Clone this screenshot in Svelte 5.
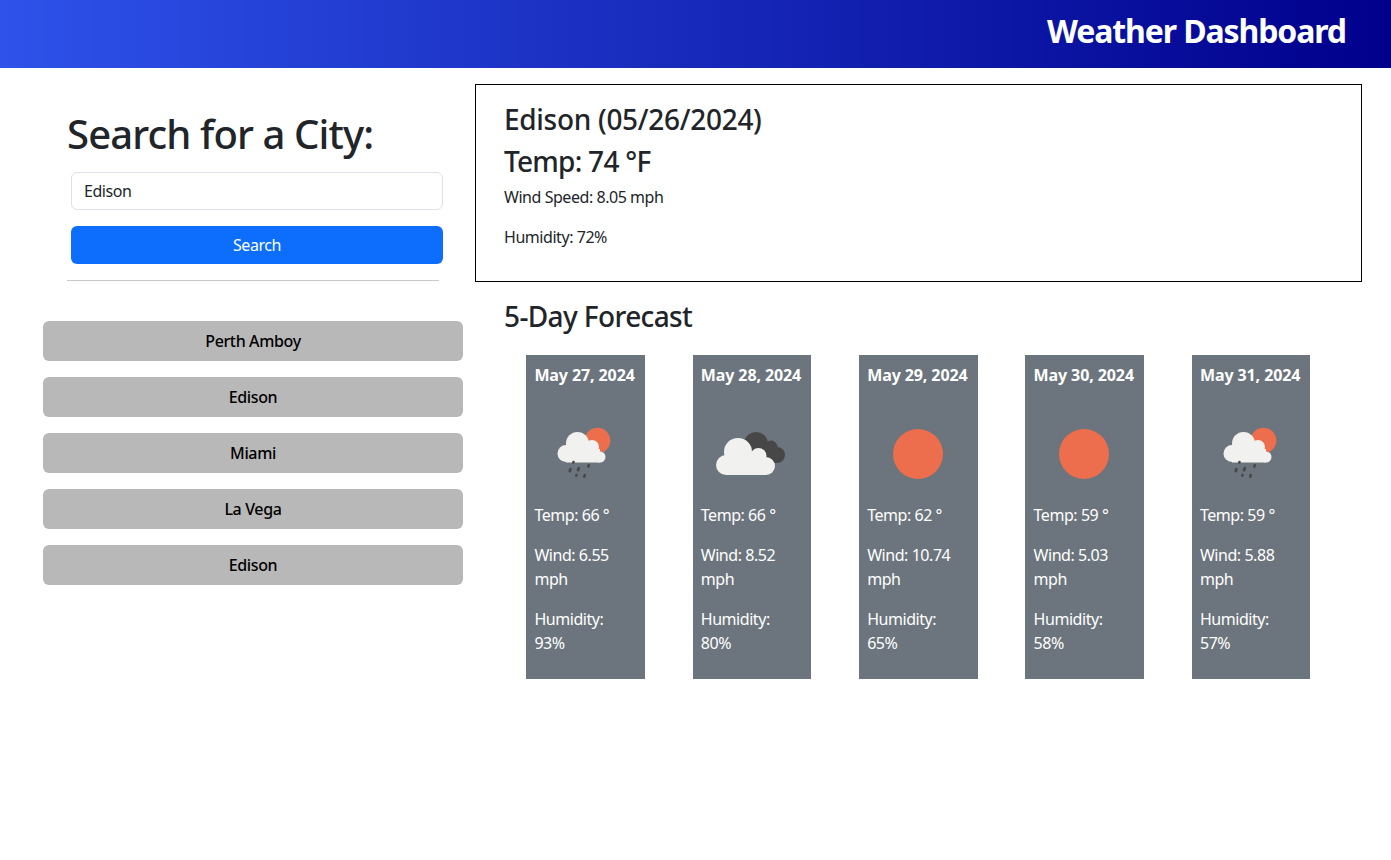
<script lang="ts">
  const cities = ['Perth Amboy', 'Edison', 'Miami', 'La Vega', 'Edison'];
  const forecast = [
    { date: 'May 27, 2024', icon: 'rain', temp: 66, wind: 6.55, humidity: 93 },
    { date: 'May 28, 2024', icon: 'clouds', temp: 66, wind: 8.52, humidity: 80 },
    { date: 'May 29, 2024', icon: 'sun', temp: 62, wind: 10.74, humidity: 65 },
    { date: 'May 30, 2024', icon: 'sun', temp: 59, wind: 5.03, humidity: 58 },
    { date: 'May 31, 2024', icon: 'rain', temp: 59, wind: 5.88, humidity: 57 }
  ];
</script>

<header>
  <h1>Weather Dashboard</h1>
</header>

<main>
  <aside>
    <form onsubmit={(e) => e.preventDefault()}>
      <h2>Search for a City:</h2>
      <input type="text" value="Edison" />
      <button class="search" type="submit">Search</button>
      <hr />
    </form>
    <div class="history">
      {#each cities as city}
        <button class="city" type="button">{city}</button>
      {/each}
    </div>
  </aside>

  <section class="results">
    <div class="current">
      <h3 class="name">Edison (05/26/2024)</h3>
      <h3 class="temp">Temp: 74 °F</h3>
      <p>Wind Speed: 8.05 mph</p>
      <p>Humidity: 72%</p>
    </div>

    <h3 class="five">5-Day Forecast</h3>
    <div class="cards">
      {#each forecast as day}
        <article>
          <p class="date">{day.date}</p>
          <svg viewBox="0 0 100 100" width="100" height="100" aria-hidden="true">
            {#if day.icon === 'sun'}
              <circle cx="50" cy="51" r="25" fill="#ec6e4c" />
            {:else if day.icon === 'rain'}
              <circle cx="62.5" cy="37.5" r="12.8" fill="#ec6e4c" />
              <g fill="#f1f1f0">
                <circle cx="42.5" cy="40.5" r="11.5" />
                <circle cx="57" cy="44" r="7" />
                <circle cx="31" cy="50.5" r="8.5" />
                <circle cx="65" cy="54" r="5.5" />
                <rect x="31" y="46" width="34" height="13.5" />
              </g>
              <g stroke="#484848" stroke-width="2.6" stroke-linecap="round">
                <path d="M38.5 59l-.2.5" />
                <path d="M35.5 66l-.8 2.2" />
                <path d="M43.8 65l-.8 2.2" />
                <path d="M53.8 62.2l-.5 1.2" />
                <path d="M41.5 72l-.3.6" />
                <path d="M49.8 72l-.6 1.6" />
              </g>
            {:else}
              <g fill="#474747">
                <circle cx="55" cy="41" r="12" />
                <circle cx="70" cy="44" r="6.5" />
                <circle cx="76" cy="52" r="8" />
                <rect x="55" y="44" width="20" height="16" />
              </g>
              <g fill="#f1f1f0">
                <circle cx="37" cy="49" r="14" />
                <circle cx="57.5" cy="53" r="8" />
                <circle cx="25" cy="62" r="10" />
                <circle cx="65" cy="63" r="9" />
                <rect x="25" y="54" width="40" height="18" />
              </g>
            {/if}
          </svg>
          <p>Temp: {day.temp} °</p>
          <p>Wind: {day.wind} mph</p>
          <p>Humidity: {day.humidity}%</p>
        </article>
      {/each}
    </div>
  </section>
</main>

<style>
  :global(body) {
    font-family: "Noto Sans", "Open Sans", sans-serif;
    font-size: 16px;
    line-height: 24px;
    letter-spacing: -0.45px;
    color: #212529;
    background: #fff;
  }
  header {
    box-sizing: border-box;
    height: 68px;
    display: flex;
    align-items: center;
    justify-content: flex-end;
    padding: 0 45px 7px 0;
    background: linear-gradient(90deg, #2e52ea, #00008b);
  }
  h1 {
    margin: 0;
    color: #fff;
    font-size: 32px;
    font-weight: 700;
    line-height: 38px;
    letter-spacing: -1.1px;
  }
  main {
    display: flex;
    padding-top: 16px;
  }
  aside {
    width: 475px;
    flex: none;
    box-sizing: border-box;
    padding-left: 43px;
  }
  form {
    width: 372px;
    margin-left: 24px;
    padding-top: 26px;
  }
  h2 {
    margin: 0 0 14px;
    font-size: 40px;
    font-weight: 500;
    line-height: 48px;
    letter-spacing: -0.87px;
    white-space: nowrap;
  }
  input {
    display: block;
    box-sizing: border-box;
    width: 372px;
    height: 38px;
    margin-left: 4px;
    padding: 6px 12px;
    border: 1px solid #dee2e6;
    border-radius: 6px;
    font: inherit;
    letter-spacing: inherit;
    color: #212529;
  }
  .search {
    display: block;
    width: 372px;
    height: 38px;
    margin: 16px 0 0 4px;
    padding: 0;
    border: 0;
    border-radius: 6px;
    background: #0d6efd;
    color: #fff;
    font: inherit;
    letter-spacing: inherit;
  }
  hr {
    margin: 16px 0 40px;
    border: 0;
    border-top: 1px solid #c8c9ca;
  }
  .history {
    display: flex;
    flex-direction: column;
    gap: 16px;
    width: 420px;
  }
  .city {
    height: 40px;
    padding: 0;
    border: 0;
    border-radius: 6px;
    background: #b8b8b8;
    color: #000;
    font: inherit;
    font-weight: 500;
    letter-spacing: -0.36px;
  }
  .results {
    width: 887px;
  }
  .current {
    box-sizing: border-box;
    height: 198px;
    padding: 17px 28px 16px;
    border: 1px solid #000;
  }
  h3 {
    margin: 0 0 8px;
    font-size: 28px;
    font-weight: 500;
    line-height: 34px;
  }
  .name {
    letter-spacing: -0.3px;
  }
  .temp {
    margin-bottom: 7px;
    letter-spacing: -0.75px;
  }
  .current p {
    margin: 0 0 16px;
  }
  .five {
    margin: 17px 0 22px 29px;
    letter-spacing: -0.62px;
  }
  .cards {
    display: flex;
    justify-content: space-around;
    width: 832px;
    margin-left: 27.4px;
  }
  article {
    box-sizing: border-box;
    width: 118.6px;
    padding: 8px 8px 8px 8.1px;
    background: #6c757d;
    color: #fff;
  }
  article p {
    margin: 0 0 16px;
  }
  article .date {
    font-weight: 700;
    letter-spacing: -0.1px;
    white-space: nowrap;
  }
  article svg {
    display: block;
    width: 100px;
    height: 100px;
    margin-left: 0.6px;
  }
</style>
